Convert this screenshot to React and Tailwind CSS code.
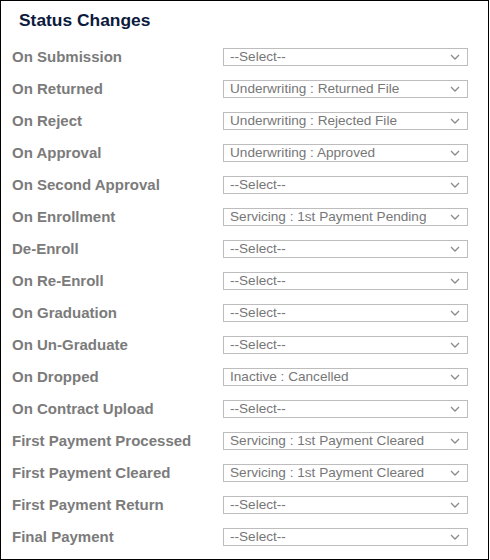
import React from 'react';

const rows = [
  ['On Submission', '--Select--'],
  ['On Returned', 'Underwriting : Returned File'],
  ['On Reject', 'Underwriting : Rejected File'],
  ['On Approval', 'Underwriting : Approved'],
  ['On Second Approval', '--Select--'],
  ['On Enrollment', 'Servicing : 1st Payment Pending'],
  ['De-Enroll', '--Select--'],
  ['On Re-Enroll', '--Select--'],
  ['On Graduation', '--Select--'],
  ['On Un-Graduate', '--Select--'],
  ['On Dropped', 'Inactive : Cancelled'],
  ['On Contract Upload', '--Select--'],
  ['First Payment Processed', 'Servicing : 1st Payment Cleared'],
  ['First Payment Cleared', 'Servicing : 1st Payment Cleared'],
  ['First Payment Return', '--Select--'],
  ['Final Payment', '--Select--'],
];

const Chevron = () => (
  <svg width="10" height="6" viewBox="0 0 10 6" className="absolute right-[7px] top-[5px] pointer-events-none">
    <path d="M1 1 L5 5 L9 1" fill="none" stroke="#8c8c8c" strokeWidth="1.3" />
  </svg>
);

const App = () => {
  return (
    <div className="w-[489px] h-[560px] border border-black bg-white font-['Liberation_Sans',Arial,sans-serif]">
      <h2 className="pl-[18px] pt-[9px] text-[17.4px] leading-[20px] font-bold text-[#0c1a3c]">Status Changes</h2>
      <div className="mt-[11px] flex flex-col">
        {rows.map(([label, value]) => (
          <div key={label} className="flex items-center h-[32px] pl-[11px]">
            <div className="w-[211px] text-[15px] font-bold text-[#7b7b7b]">{label}</div>
            <div className="relative w-[245px] h-[18px] border border-[#bdbdbd] bg-white">
              <div className="pl-[6px] text-[13.6px] leading-[16px] text-[#777] whitespace-nowrap">{value}</div>
              <Chevron />
            </div>
          </div>
        ))}
      </div>
    </div>
  );
};

export default App;
